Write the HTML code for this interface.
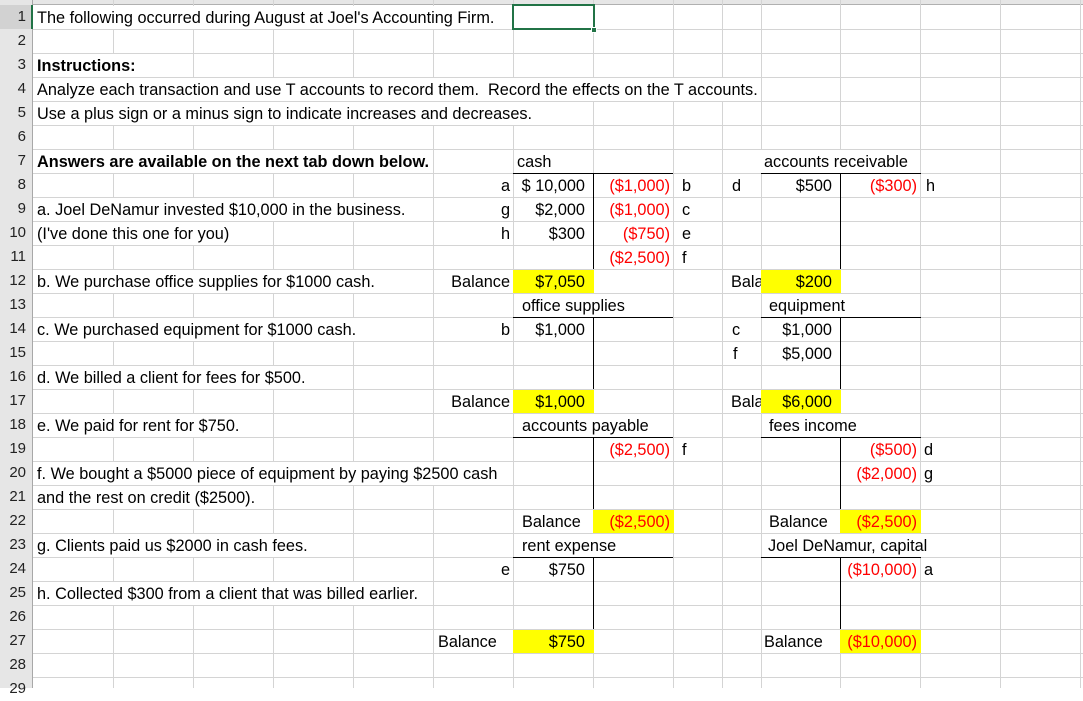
<!DOCTYPE html>
<html><head><meta charset="utf-8"><style>
*{margin:0;padding:0;box-sizing:border-box}
body{width:1083px;height:688px;overflow:hidden;background:#fff;position:relative;font-family:"Liberation Sans",Arial,sans-serif;font-size:16.3px;color:#000}
.v{position:absolute;top:0;width:1px;height:688px;background:#d4d4d4}
.h{position:absolute;left:33px;height:1px;width:1050px;background:#d4d4d4}
.t{position:absolute;height:23px;line-height:25px;white-space:nowrap}
.w{background:#fff;padding:0 3px}
.r{text-align:right;padding-right:3px}
.n{padding-right:8px}
.red{color:#ff0000}
.y{background:#ffff00}
.rn{position:absolute;left:0;width:33px;height:24px;line-height:24px;text-align:right;padding-right:7px;font-size:15px;color:#222}
.bk{position:absolute;background:#000}
</style></head><body>
<div style="position:absolute;left:0;top:0;width:1083px;height:5px;background:#e6e6e6;border-bottom:1px solid #b0b0b0"></div>
<div style="position:absolute;left:0;top:0;width:33px;height:688px;background:#e6e6e6;border-right:1px solid #a8a8a8"></div>
<div style="position:absolute;left:0;top:5px;width:33px;height:24px;background:#d2d2d2;border-right:2px solid #217346"></div>
<div class="v" style="left:113px"></div><div class="v" style="left:193px"></div><div class="v" style="left:273px"></div><div class="v" style="left:353px"></div><div class="v" style="left:433px"></div><div class="v" style="left:513px"></div><div class="v" style="left:593px"></div><div class="v" style="left:673px"></div><div class="v" style="left:722px"></div><div class="v" style="left:761px"></div><div class="v" style="left:840px"></div><div class="v" style="left:920px"></div><div class="v" style="left:1000px"></div><div class="v" style="left:1080px"></div>
<div class="h" style="top:29px"></div><div class="h" style="top:53px"></div><div class="h" style="top:77px"></div><div class="h" style="top:101px"></div><div class="h" style="top:125px"></div><div class="h" style="top:149px"></div><div class="h" style="top:173px"></div><div class="h" style="top:197px"></div><div class="h" style="top:221px"></div><div class="h" style="top:245px"></div><div class="h" style="top:269px"></div><div class="h" style="top:293px"></div><div class="h" style="top:317px"></div><div class="h" style="top:341px"></div><div class="h" style="top:365px"></div><div class="h" style="top:389px"></div><div class="h" style="top:413px"></div><div class="h" style="top:437px"></div><div class="h" style="top:461px"></div><div class="h" style="top:485px"></div><div class="h" style="top:509px"></div><div class="h" style="top:533px"></div><div class="h" style="top:557px"></div><div class="h" style="top:581px"></div><div class="h" style="top:605px"></div><div class="h" style="top:629px"></div><div class="h" style="top:653px"></div><div class="h" style="top:677px"></div>
<div class="rn" style="top:5px">1</div><div class="rn" style="top:29px">2</div><div class="rn" style="top:53px">3</div><div class="rn" style="top:77px">4</div><div class="rn" style="top:101px">5</div><div class="rn" style="top:125px">6</div><div class="rn" style="top:149px">7</div><div class="rn" style="top:173px">8</div><div class="rn" style="top:197px">9</div><div class="rn" style="top:221px">10</div><div class="rn" style="top:245px">11</div><div class="rn" style="top:269px">12</div><div class="rn" style="top:293px">13</div><div class="rn" style="top:317px">14</div><div class="rn" style="top:341px">15</div><div class="rn" style="top:365px">16</div><div class="rn" style="top:389px">17</div><div class="rn" style="top:413px">18</div><div class="rn" style="top:437px">19</div><div class="rn" style="top:461px">20</div><div class="rn" style="top:485px">21</div><div class="rn" style="top:509px">22</div><div class="rn" style="top:533px">23</div><div class="rn" style="top:557px">24</div><div class="rn" style="top:581px">25</div><div class="rn" style="top:605px">26</div><div class="rn" style="top:629px">27</div><div class="rn" style="top:653px">28</div><div class="rn" style="top:677px">29</div>

<div class="t w" style="left:34px;top:6px">The following occurred during August at Joel's Accounting Firm.</div>
<div class="t w" style="left:34px;top:54px;font-weight:bold">Instructions:</div>
<div class="t w" style="left:34px;top:78px">Analyze each transaction and use T accounts to record them.&nbsp; Record the effects on the T accounts.</div>
<div class="t w" style="left:34px;top:102px">Use a plus sign or a minus sign to indicate increases and decreases.</div>
<div class="t w" style="left:34px;top:150px;font-weight:bold">Answers are available on the next tab down below.</div>
<div class="t w" style="left:34px;top:198px">a. Joel DeNamur invested $10,000 in the business.</div>
<div class="t w" style="left:34px;top:222px">(I've done this one for you)</div>
<div class="t w" style="left:34px;top:270px">b. We purchase office supplies for $1000 cash.</div>
<div class="t w" style="left:34px;top:318px">c. We purchased equipment for $1000 cash.</div>
<div class="t w" style="left:34px;top:366px">d. We billed a client for fees for $500.</div>
<div class="t w" style="left:34px;top:414px">e. We paid for rent for $750.</div>
<div class="t w" style="left:34px;top:462px">f. We bought a $5000 piece of equipment by paying $2500 cash</div>
<div class="t w" style="left:34px;top:486px">and the rest on credit ($2500).</div>
<div class="t w" style="left:34px;top:534px">g. Clients paid us $2000 in cash fees.</div>
<div class="t w" style="left:34px;top:582px">h. Collected $300 from a client that was billed earlier.</div>

<div style="position:absolute;left:512px;top:4px;width:83px;height:26px;border:2px solid #217346;background:#fff"></div>
<div style="position:absolute;left:591px;top:27px;width:6px;height:6px;background:#217346;border:1px solid #fff"></div>

<div class="y" style="position:absolute;left:513px;top:270px;width:81px;height:23px"></div>
<div class="y" style="position:absolute;left:761px;top:270px;width:80px;height:23px"></div>
<div class="y" style="position:absolute;left:513px;top:390px;width:81px;height:23px"></div>
<div class="y" style="position:absolute;left:761px;top:390px;width:80px;height:23px"></div>
<div class="y" style="position:absolute;left:593px;top:510px;width:81px;height:23px"></div>
<div class="y" style="position:absolute;left:840px;top:510px;width:81px;height:23px"></div>
<div class="y" style="position:absolute;left:513px;top:630px;width:81px;height:23px"></div>
<div class="y" style="position:absolute;left:840px;top:630px;width:81px;height:23px"></div>

<div class="bk" style="left:513px;top:173px;width:160px;height:1px"></div><div class="bk" style="left:593px;top:173px;width:1px;height:96px"></div>
<div class="bk" style="left:513px;top:317px;width:160px;height:1px"></div><div class="bk" style="left:593px;top:317px;width:1px;height:72px"></div>
<div class="bk" style="left:513px;top:437px;width:160px;height:1px"></div><div class="bk" style="left:593px;top:437px;width:1px;height:72px"></div>
<div class="bk" style="left:513px;top:557px;width:160px;height:1px"></div><div class="bk" style="left:593px;top:557px;width:1px;height:72px"></div>
<div class="bk" style="left:761px;top:173px;width:160px;height:1px"></div><div class="bk" style="left:840px;top:173px;width:1px;height:96px"></div>
<div class="bk" style="left:761px;top:317px;width:160px;height:1px"></div><div class="bk" style="left:840px;top:317px;width:1px;height:72px"></div>
<div class="bk" style="left:761px;top:437px;width:160px;height:1px"></div><div class="bk" style="left:840px;top:437px;width:1px;height:72px"></div>
<div class="bk" style="left:761px;top:557px;width:160px;height:1px"></div><div class="bk" style="left:840px;top:557px;width:1px;height:72px"></div>

<div class="t w" style="left:514px;top:150px">cash</div>
<div class="t w" style="left:761px;top:150px">accounts receivable</div>
<div class="t w" style="left:519px;top:294px">office supplies</div>
<div class="t w" style="left:766px;top:294px">equipment</div>
<div class="t w" style="left:519px;top:414px">accounts payable</div>
<div class="t w" style="left:766px;top:414px">fees income</div>
<div class="t w" style="left:519px;top:534px">rent expense</div>
<div class="t w" style="left:765px;top:534px">Joel DeNamur, capital</div>

<div class="t r" style="left:433px;width:80px;top:174px">a</div>
<div class="t r n" style="left:513px;width:80px;top:174px">$ 10,000</div>
<div class="t r red" style="left:593px;width:80px;top:174px">($1,000)</div>
<div class="t" style="left:682px;top:174px">b</div>
<div class="t r" style="left:433px;width:80px;top:198px">g</div>
<div class="t r n" style="left:513px;width:80px;top:198px">$2,000</div>
<div class="t r red" style="left:593px;width:80px;top:198px">($1,000)</div>
<div class="t" style="left:682px;top:198px">c</div>
<div class="t r" style="left:433px;width:80px;top:222px">h</div>
<div class="t r n" style="left:513px;width:80px;top:222px">$300</div>
<div class="t r red" style="left:593px;width:80px;top:222px">($750)</div>
<div class="t" style="left:682px;top:222px">e</div>
<div class="t r red" style="left:593px;width:80px;top:246px">($2,500)</div>
<div class="t" style="left:682px;top:246px">f</div>
<div class="t r" style="left:420px;width:93px;top:270px">Balance</div>
<div class="t r n" style="left:513px;width:80px;top:270px">$7,050</div>

<div class="t" style="left:732px;top:174px">d</div>
<div class="t r n" style="left:761px;width:79px;top:174px">$500</div>
<div class="t r red" style="left:840px;width:80px;top:174px">($300)</div>
<div class="t" style="left:926px;top:174px">h</div>
<div class="t" style="left:731px;top:270px;width:30px;overflow:hidden">Balance</div>
<div class="t r n" style="left:761px;width:79px;top:270px">$200</div>

<div class="t r" style="left:433px;width:80px;top:318px">b</div>
<div class="t r n" style="left:513px;width:80px;top:318px">$1,000</div>
<div class="t r" style="left:420px;width:93px;top:390px">Balance</div>
<div class="t r n" style="left:513px;width:80px;top:390px">$1,000</div>

<div class="t" style="left:732px;top:318px">c</div>
<div class="t r n" style="left:761px;width:79px;top:318px">$1,000</div>
<div class="t" style="left:733px;top:342px">f</div>
<div class="t r n" style="left:761px;width:79px;top:342px">$5,000</div>
<div class="t" style="left:731px;top:390px;width:30px;overflow:hidden">Balance</div>
<div class="t r n" style="left:761px;width:79px;top:390px">$6,000</div>

<div class="t r red" style="left:593px;width:80px;top:438px">($2,500)</div>
<div class="t" style="left:682px;top:438px">f</div>
<div class="t" style="left:522px;top:510px">Balance</div>
<div class="t r red" style="left:593px;width:80px;top:510px">($2,500)</div>

<div class="t r red" style="left:840px;width:80px;top:438px">($500)</div>
<div class="t" style="left:924px;top:438px">d</div>
<div class="t r red" style="left:840px;width:80px;top:462px">($2,000)</div>
<div class="t" style="left:924px;top:462px">g</div>
<div class="t" style="left:769px;top:510px">Balance</div>
<div class="t r red" style="left:840px;width:80px;top:510px">($2,500)</div>

<div class="t r" style="left:433px;width:80px;top:558px">e</div>
<div class="t r n" style="left:513px;width:80px;top:558px">$750</div>
<div class="t" style="left:438px;top:630px">Balance</div>
<div class="t r n" style="left:513px;width:80px;top:630px">$750</div>

<div class="t r red" style="left:840px;width:80px;top:558px">($10,000)</div>
<div class="t" style="left:924px;top:558px">a</div>
<div class="t" style="left:764px;top:630px">Balance</div>
<div class="t r red" style="left:840px;width:80px;top:630px">($10,000)</div>
</body></html>
